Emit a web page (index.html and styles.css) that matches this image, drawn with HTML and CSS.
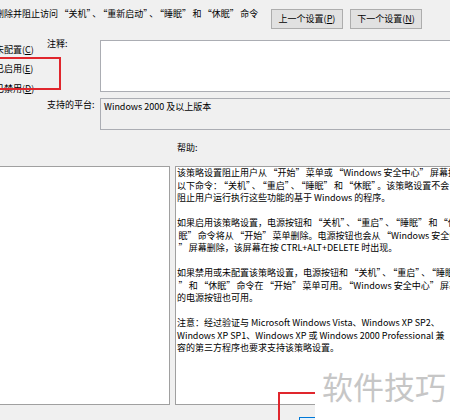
FILE: index.html
```html
<!DOCTYPE html>
<html lang="zh-CN">
<head>
  <meta charset="UTF-8" />
  <meta name="viewport" content="width=device-width, initial-scale=1.0" />
  <title>删除并阻止访问“关机”、“重新启动”、“睡眠”和“休眠”命令</title>
  <link rel="stylesheet" href="styles.css">
</head>

<body>
  <div class="dialog">
    <div class="header">
      <div class="title">删除并阻止访问<span class="q">“关机”</span>、<span class="q">“重新启动”</span>、<span class="q">“睡眠”</span>和<span class="q">“休眠”</span>命令</div>
      <div class="nav">
        <button class="btn">上一个设置(<u>P</u>)</button>
        <button class="btn">下一个设置(<u>N</u>)</button>
      </div>
    </div>

    <div class="settings">
      <div class="options">
        <label>未配置(<u>C</u>)</label>
        <label>已启用(<u>E</u>)</label>
        <label>已禁用(<u>D</u>)</label>
      </div>
      <div class="fields">
        <div class="field field-comment">
          <span class="field-label">注释:</span>
          <div class="box box-edit"></div>
        </div>
        <div class="field field-platform">
          <span class="field-label">支持的平台:</span>
          <div class="box box-readonly">Windows 2000 及以上版本</div>
        </div>
      </div>
      <div class="mark mark-option"></div>
    </div>

    <div class="help-title">帮助:</div>

    <div class="panels">
      <div class="panel panel-options"></div>
      <div class="panel panel-help">
        <p>该策略设置阻止用户从<span class="q">“开始”</span>菜单或<span class="q">“Windows 安全中心”</span>屏幕执行<br>
          以下命令：<span class="q">“关机”</span>、<span class="q">“重启”</span>、<span class="q">“睡眠”</span>和<span class="q">“休眠”</span>。该策略设置不会<br>
          阻止用户运行执行这些功能的基于 Windows 的程序。</p>
        <p>如果启用该策略设置，电源按钮和<span class="q">“关机”</span>、<span class="q">“重启”</span>、<span class="q">“睡眠”</span>和<span class="q">“休</span><br>
          <span class="q">眠”</span>命令将从<span class="q">“开始”</span>菜单删除。电源按钮也会从<span class="q">“Windows 安全中心</span><br>
          <span class="q">”</span>屏幕删除，该屏幕在按 CTRL+ALT+DELETE 时出现。</p>
        <p>如果禁用或未配置该策略设置，电源按钮和<span class="q">“关机”</span>、<span class="q">“重启”</span>、<span class="q">“睡眠</span><br>
          <span class="q">”</span>和<span class="q">“休眠”</span>命令在<span class="q">“开始”</span>菜单可用。<span class="q">“Windows 安全中心”</span>屏幕上<br>
          的电源按钮也可用。</p>
        <p>注意：经过验证与 Microsoft Windows Vista、Windows XP SP2、<br>
          Windows XP SP1、Windows XP 或 Windows 2000 Professional 兼<br>
          容的第三方程序也要求支持该策略设置。</p>
      </div>
    </div>

    <div class="footer">
      <button class="btn btn-ok">确定</button>
    </div>
  </div>

  <div class="mark mark-ok"></div>
  <div class="watermark">软件技巧</div>
</body>
</html>
```

FILE: styles.css
```css
html,
body {
  height: 420px;
  overflow: hidden;
}

body {
  margin: 0;
  position: relative;
  background: #f0f0f0;
  font-family: "Noto Sans CJK SC", sans-serif;
  font-size: 9px;
  color: #000;
}

.dialog {
  width: 620px;
  margin-left: -10px;
}

.q {
  margin: 0 1.4px;
}

.header {
  display: flex;
  height: 36px;
}

.title {
  width: 276px;
  margin-left: 5px;
  padding-top: 7px;
  line-height: 14px;
  white-space: nowrap;
}

.nav {
  display: flex;
  gap: 7px;
  padding-top: 9px;
}

.btn {
  width: 72px;
  height: 20px;
  padding: 0;
  background: #e1e1e1;
  border: 1px solid #adadad;
  font: inherit;
  line-height: 18px;
  color: #000;
}

.settings {
  display: flex;
  position: relative;
}

.options {
  width: 52px;
  padding: 6.5px 0 0 5px;
}

.options label {
  display: block;
  line-height: 13px;
  margin-bottom: 6.5px;
  white-space: nowrap;
}

.fields {
  flex: 1;
}

.field {
  display: flex;
}

.field-label {
  flex: none;
  width: 53px;
  line-height: 13px;
  white-space: nowrap;
}

.field-comment {
  margin-top: 4px;
}

.field-comment .field-label {
  margin-top: -3px;
}

.field-platform {
  margin-top: 6px;
}

.box {
  flex: 1;
  box-sizing: border-box;
  border: 1px solid #abadb3;
}

.box-edit {
  height: 52px;
  background: #fff;
}

.box-readonly {
  height: 32px;
  padding: 1px 3px;
  line-height: 13px;
}

.mark {
  position: absolute;
  box-sizing: border-box;
  border: 2px solid #e0262d;
}

.mark-option {
  left: 0;
  top: 21px;
  width: 71px;
  height: 33px;
}

.help-title {
  height: 36px;
  box-sizing: border-box;
  padding: 10.5px 0 0 187px;
  line-height: 13px;
}

.panels {
  display: flex;
  gap: 5px;
  height: 239px;
}

.panel {
  box-sizing: border-box;
  border: 1px solid #a0a0a0;
  background: #fff;
}

.panel-options {
  width: 180px;
}

.panel-help {
  flex: 1;
  padding: 0 1px;
  line-height: 12.5px;
  white-space: nowrap;
  overflow: hidden;
}

.panel-help p {
  margin: 0 0 12.5px;
}

.footer {
  padding: 12px 0 0 309px;
}

.btn-ok {
  width: 75px;
  height: 23px;
  border-color: #0078d7;
  background: #e5f1fb;
}

.mark-ok {
  left: 278px;
  top: 392px;
  width: 120px;
  height: 60px;
}

.watermark {
  position: absolute;
  left: 315px;
  top: 362px;
  right: 0;
  bottom: 0;
  padding: 8px 0 0 7px;
  background: #fff;
  color: #c6c6c6;
  font-size: 31px;
  line-height: 31px;
  white-space: nowrap;
}
```
